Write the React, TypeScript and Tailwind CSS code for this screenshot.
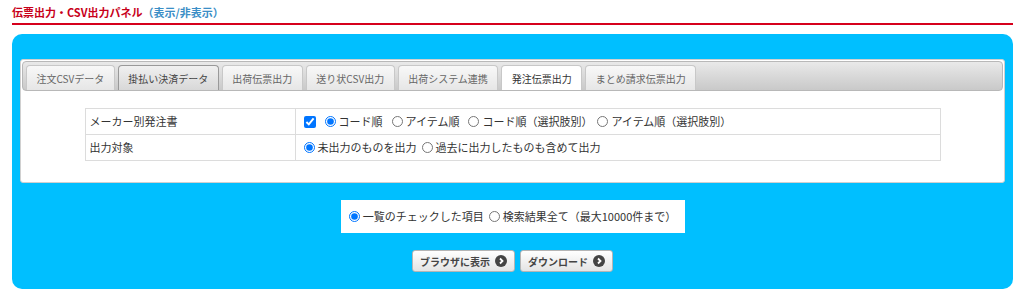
const tabs = [
  '注文CSVデータ',
  '掛払い決済データ',
  '出荷伝票出力',
  '送り状CSV出力',
  '出荷システム連携',
  '発注伝票出力',
  'まとめ請求伝票出力',
]

function Radio({ checked = false }: { checked?: boolean }) {
  return (
    <input
      type="radio"
      readOnly
      checked={checked}
      className="m-0 h-[11px] w-[11px] accent-[#0075ff]"
    />
  )
}

function CircleArrow() {
  return (
    <svg width="12" height="12" viewBox="0 0 12 12" className="shrink-0">
      <circle cx="6" cy="6" r="6" fill="#444" />
      <path d="M5 3.5 L7.5 6 L5 8.5" stroke="#fff" strokeWidth="1.8" fill="none" />
    </svg>
  )
}

export default function App() {
  return (
    <div
      className="h-[297px] w-[1024px] overflow-hidden bg-white text-[#333]"
      style={{ fontFamily: '"Noto Sans CJK JP", "Noto Sans", sans-serif' }}
    >
      {/* title */}
      <div className="px-3 pt-[5px] text-[11px] leading-[14px] font-bold text-[#c8001a]">
        伝票出力・CSV出力パネル
        <span className="text-[#3a8ec6]">（表示/非表示）</span>
      </div>
      <div className="mx-3 mt-[4px] h-[2px] w-[1001px] bg-[#d6001c]" />

      {/* blue panel */}
      <div className="mt-[9px] ml-3 w-[1001px] rounded-[10px] bg-[#00bfff] px-2 pt-[25px] pb-[17px]">
        <div className="w-[985px] rounded-[3px] border border-[#d0d0d0] bg-white p-[1px] pb-[21px]">
          {/* tab bar */}
          <div className="flex h-[30px] items-end gap-[3px] rounded-[4px] border border-[#b8b8b8] bg-gradient-to-b from-[#e9e9e9] to-[#c9c9c9] px-[3px]">
            {tabs.map((t) => {
              const active = t === '発注伝票出力'
              const hover = t === '掛払い決済データ'
              return (
                <div
                  key={t}
                  className={`flex h-[25px] items-center rounded-t-[4px] border border-b-0 px-[9.5px] text-[10px] ${
                    active
                      ? 'border-[#c8c8c8] bg-white text-[#333]'
                      : hover
                        ? 'border-[#999] bg-gradient-to-b from-[#f0f0f0] to-[#d8d8d8] text-[#444]'
                        : 'border-[#c8c8c8] bg-gradient-to-b from-[#f8f8f8] to-[#e6e6e6] text-[#666]'
                  }`}
                >
                  {t}
                </div>
              )
            })}
          </div>

          {/* settings table */}
          <table className="mx-auto mt-[17px] w-[856px] border-collapse text-[11px]">
            <tbody>
              <tr className="h-[26px]">
                <td className="w-[210px] border border-[#dcdcdc] px-[4px] align-middle">
                  メーカー別発注書
                </td>
                <td className="border border-[#dcdcdc] px-[8px]">
                  <div className="flex items-center">
                    <input
                      type="checkbox"
                      readOnly
                      checked
                      className="m-0 h-[12px] w-[12px] accent-[#0075ff]"
                    />
                    <span className="ml-[9px] flex items-center gap-[3px]">
                      <Radio checked />
                      コード順
                    </span>
                    <span className="ml-[9px] flex items-center gap-[3px]">
                      <Radio />
                      アイテム順
                    </span>
                    <span className="ml-[9px] flex items-center gap-[3px]">
                      <Radio />
                      コード順（選択肢別）
                    </span>
                    <span className="ml-[5px] flex items-center gap-[3px]">
                      <Radio />
                      アイテム順（選択肢別）
                    </span>
                  </div>
                </td>
              </tr>
              <tr className="h-[26px]">
                <td className="border border-[#dcdcdc] px-[4px]">出力対象</td>
                <td className="border border-[#dcdcdc] px-[8px]">
                  <div className="flex items-center">
                    <span className="flex items-center gap-[3px]">
                      <Radio checked />
                      未出力のものを出力
                    </span>
                    <span className="ml-[5px] flex items-center gap-[3px]">
                      <Radio />
                      過去に出力したものも含めて出力
                    </span>
                  </div>
                </td>
              </tr>
            </tbody>
          </table>
        </div>

        {/* target select */}
        <div className="mt-[17px] flex justify-center">
          <div className="flex h-[33px] w-[344px] items-center justify-center gap-[5px] bg-white text-[11px]">
            <span className="flex items-center gap-[3px]">
              <Radio checked />
              一覧のチェックした項目
            </span>
            <span className="flex items-center gap-[3px]">
              <Radio />
              検索結果全て（最大10000件まで）
            </span>
          </div>
        </div>

        {/* buttons */}
        <div className="mt-[17px] flex justify-center gap-[5px]">
          {['ブラウザに表示', 'ダウンロード'].map((b) => (
            <button
              key={b}
              className="flex h-[22px] items-center gap-[5px] rounded-[3px] border border-[#b5b5b5] bg-gradient-to-b from-white to-[#e4e4e4] px-[7px] text-[10px] font-bold text-[#444]"
            >
              {b}
              <CircleArrow />
            </button>
          ))}
        </div>
      </div>
    </div>
  )
}
